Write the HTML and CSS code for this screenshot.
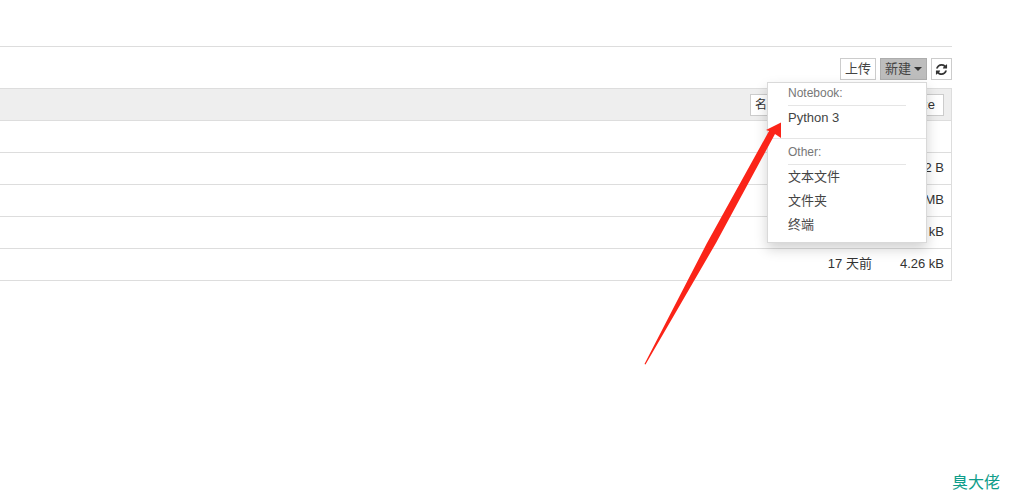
FILE: index.html
```html
<!DOCTYPE html>
<html lang="zh">
<head>
<meta charset="utf-8">
<title>Jupyter</title>
<link rel="stylesheet" href="styles.css">
</head>
<body>
<div class="page">
  <div class="toolbar">
    <button class="btn">上传</button>
    <button class="btn btn-active">新建<span class="caret"></span></button>
    <button class="btn btn-icon" aria-label="刷新">
      <svg width="13" height="13" viewBox="0 0 1792 1792"><path d="M1639 1056q0 5-1 7-64 268-268 434.500t-478 166.500q-146 0-282.500-55t-243.500-157l-129 129q-19 19-45 19t-45-19-19-45v-448q0-26 19-45t45-19h448q26 0 45 19t19 45-19 45l-137 137q71 66 161 102t187 36q134 0 250-65t186-179q11-17 53-117 8-23 30-23h192q13 0 22.500 9.500t9.500 22.500zm25-800v448q0 26-19 45t-45 19h-448q-26 0-45-19t-19-45 19-45l138-138q-148-137-349-137-134 0-250 65t-186 179q-11 17-53 117-8 23-30 23h-199q-13 0-22.500-9.500t-9.500-22.500v-7q65-268 270-434.500t480-166.500q146 0 284 55.500t245 156.500l130-129q19-19 45-19t45 19 19 45z" fill="#333"/></svg>
    </button>
  </div>
  <div class="list">
    <div class="list-head">
      <span class="sort sort-name">名</span>
      <span class="sort sort-size">File size</span>
    </div>
    <div class="row"></div>
    <div class="row"><span class="size">812 B</span></div>
    <div class="row"><span class="size">1.2 MB</span></div>
    <div class="row"><span class="size">3.14 kB</span></div>
    <div class="row"><span class="time">17 天前</span><span class="size">4.26 kB</span></div>
  </div>
</div>
<div class="menu">
  <div class="menu-label">Notebook:</div>
  <div class="menu-rule"></div>
  <div class="menu-item">Python 3</div>
  <div class="menu-divider"></div>
  <div class="menu-label">Other:</div>
  <div class="menu-rule"></div>
  <div class="menu-item">文本文件</div>
  <div class="menu-item">文件夹</div>
  <div class="menu-item">终端</div>
</div>
<svg class="arrow" width="1010" height="502" viewBox="0 0 1010 502"><polygon points="781,122.500 781,138 775,134 716,243 645.500,364.500 644.500,364 707,243 769,131 766,130" fill="#fb2418"/></svg>
<div class="mark">臭大佬</div>
</body>
</html>
```
FILE: styles.css
```css
* { box-sizing: border-box; }
html, body { margin: 0; padding: 0; }
body {
  width: 1010px;
  height: 502px;
  overflow: hidden;
  background: #fff;
  color: #333;
  font: 13px/18px "Liberation Sans", "Noto Sans CJK SC", sans-serif;
}
.page {
  width: 952px;
  margin-top: 46px;
  border-top: 1px solid #ddd;
}
.toolbar {
  display: flex;
  justify-content: flex-end;
  gap: 4px;
  padding-top: 11px;
  height: 41px;
}
.btn {
  height: 22px;
  padding: 0 4px;
  border: 1px solid #ccc;
  background: #fff;
  color: #444;
  font: 13px/18px "Liberation Sans", "Noto Sans CJK SC", sans-serif;
  display: flex;
  align-items: center;
  gap: 3px;
}
.btn-active { background: #bdbdbd; border-color: #adadad; }
.btn-icon { width: 21px; justify-content: center; padding: 0; }
.caret {
  width: 0;
  height: 0;
  border-top: 4px solid #333;
  border-left: 4px solid transparent;
  border-right: 4px solid transparent;
}
.list {
  border: 1px solid #ddd;
  border-left: 0;
  height: 193px;
}
.list-head {
  height: 32px;
  background: #eee;
  border-bottom: 1px solid #ddd;
  display: flex;
  justify-content: space-between;
  align-items: center;
  padding: 0 7px 0 750px;
}
.sort {
  height: 22px;
  background: #fff;
  border: 1px solid #ccc;
  font-size: 12px;
  line-height: 20px;
  padding: 0 4px;
  white-space: nowrap;
}
.sort-name { width: 30px; }
.sort-size { width: 70px; font-size: 13px; text-align: right; padding-right: 8px; }
.row {
  height: 32px;
  border-bottom: 1px solid #ddd;
  display: flex;
  justify-content: flex-end;
  align-items: center;
  padding: 0 7px 2px 0;
  color: #333;
}
.row:last-child { border-bottom: 0; }
.time { margin-right: 28px; }
.menu {
  position: absolute;
  left: 767px;
  top: 82px;
  width: 160px;
  height: 161px;
  padding: 1px 20px 0;
  background: #fff;
  border: 1px solid rgba(0, 0, 0, .15);
  box-shadow: 0 6px 12px rgba(0, 0, 0, .18);
  font-size: 13px;
  line-height: 20px;
}
.menu-label { color: #777; font-size: 12px; line-height: 18px; }
.menu-rule { height: 1px; background: #e5e5e5; margin: 3px 0 0; }
.menu-item { height: 24px; line-height: 24px; color: #444; }
.menu-divider { height: 1px; background: #e5e5e5; margin: 8px -20px 4px; }
.arrow { position: absolute; left: 0; top: 0; pointer-events: none; }
.mark {
  position: absolute;
  left: 952px;
  top: 473px;
  font-size: 16px;
  line-height: 20px;
  color: #0f9d8a;
}
```
